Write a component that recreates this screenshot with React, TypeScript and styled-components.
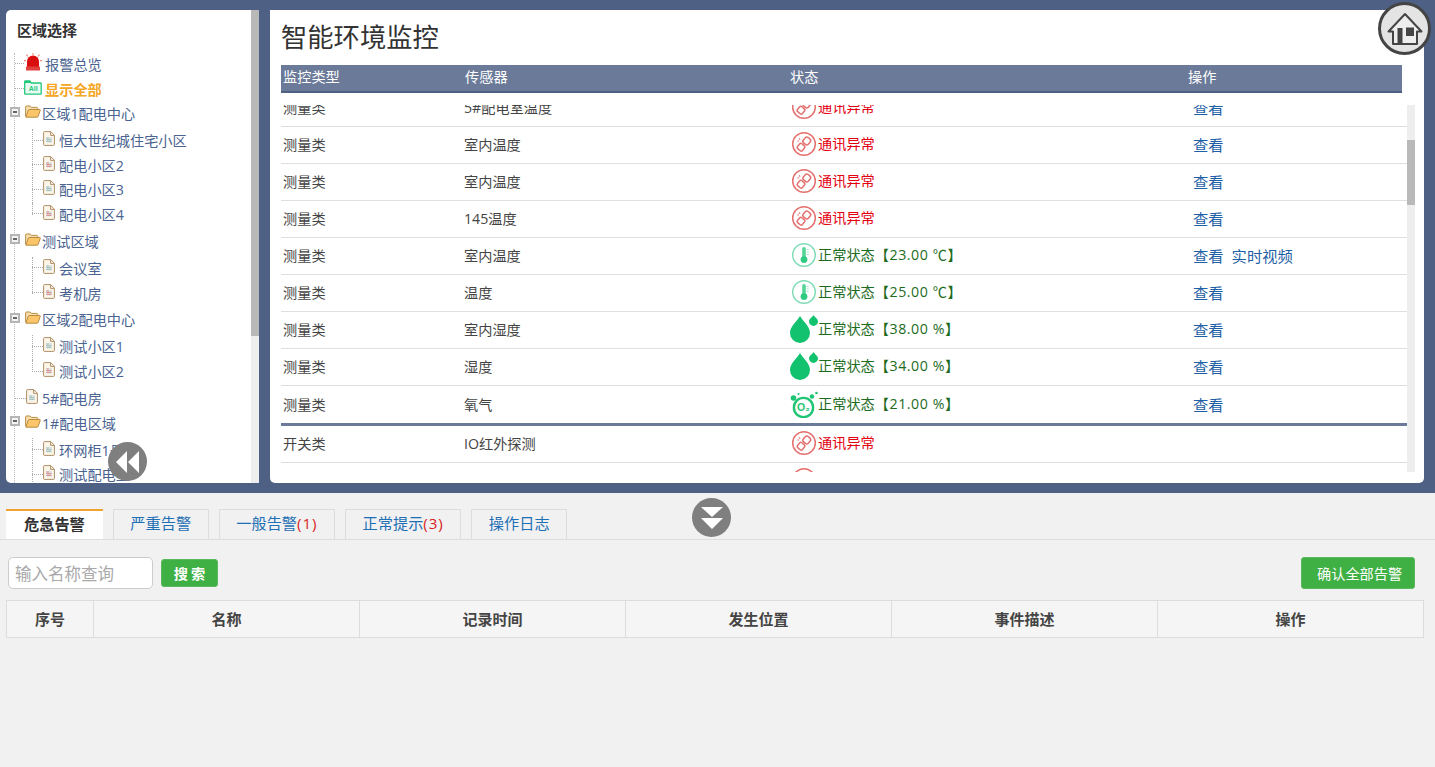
import React from "react";
import styled, { createGlobalStyle } from "styled-components";

const FONT = `"Open Sans", "Noto Sans CJK SC", "Liberation Sans", sans-serif`;

const Global = createGlobalStyle`
  html, body { margin: 0; padding: 0; height: 100%; overflow: hidden; background: #f1f1f1; }
  body { font-family: ${FONT}; font-size: 14.2px; }
  * { box-sizing: border-box; }
  ul { list-style: none; margin: 0; padding: 0; }
`;

const Page = styled.div`position: relative; width: 1435px; height: 767px; overflow: hidden;`;
const TopBand = styled.div`
  display: flex; gap: 11px; height: 493px; padding: 10px 11px 10px 6px; background: #4f6085;
`;

/* ---- tree ---- */
const TreePanel = styled.aside`
  position: relative; width: 253px; height: 473px; background: #fff; overflow: hidden;
  border-radius: 5px 0 0 5px;
  display: flex;
`;
const TreeBody = styled.div`flex: 1; min-width: 0; overflow: hidden;`;
const TreeTitle = styled.h3`
  margin: 0; height: 42.7px; padding: 9px 0 0 11px; font-size: 15px; line-height: 22px; font-weight: 700; color: #333;
`;
const VScroll = styled.div<{ $top: number; $h: number }>`
  width: 8px; height: 100%; background: #eee; position: relative; flex: none;
  &::after {
    content: ""; position: absolute; left: 0; right: 0; top: ${p => p.$top}px; height: ${p => p.$h}px; background: #b9b9b9;
  }
`;
const TopList = styled.ul`margin-left: 8px; border-left: 1px dotted #bdbdbd; `;
const Row = styled.div`
  display: flex; align-items: center; height: 24.6px; white-space: nowrap;
  color: #4a6390; font-size: 14.2px; line-height: 20px;
`;
const RowLabel = styled.span<{ $hl?: boolean; $gap: number }>`
  margin-left: ${p => p.$gap}px;
  color: ${p => (p.$hl ? "#f5a623" : "#4a6390")}; font-weight: ${p => (p.$hl ? 700 : 400)};
`;
const Dash = styled.i<{ $w: number }>`
  display: block; width: ${p => p.$w}px; border-top: 1px dotted #aaa; margin-bottom: 2px; flex: none;
`;
const Expander = styled.i`
  display: block; position: relative; z-index: 1; flex: none; width: 10px; height: 10px; margin: 0 5px 5px -5px;
  background: #f4f4f4; border: 2px solid #b5b5b5;
  &::after { content: ""; position: absolute; left: 1px; right: 1px; top: 2px; height: 2px; background: #666; }
`;
const IconSlot = styled.span`display: flex; flex: none; margin-bottom: 5px;`;
const ChildList = styled.ul`padding: 2.4px 0; margin-left: 17px;`;
const ChildRow = styled.li`
  position: relative;
  &::before {
    content: ""; position: absolute; left: 0; top: 0; bottom: 0; border-left: 1px dotted #aaa;
  }
  &:last-child::before { bottom: 50%; }
`;

const Alarm = () => (
  <svg width="18" height="18" viewBox="0 0 18 18">
    <path d="M3 15V8.5a6 6 0 0 1 12 0V15z" fill="#d90f0f" />
    <rect x="2" y="13.6" width="14" height="4" rx=".6" fill="#e2403f" />
    <g stroke="#f08a7a" strokeWidth="1.1">
      <path d="M9 0v2M2.4 1.6 4 3.4M15.6 1.6 14 3.4M0 7.6h2M16 7.6h2" />
    </g>
  </svg>
);
const AllFolder = () => (
  <svg width="18" height="15" viewBox="0 0 18 15">
    <path d="M.7 3V1.6c0-.5.3-.8.8-.8h4.4l1.4 2.2h9c.5 0 .9.3.9.8v9.6c0 .5-.4.8-.9.8H1.5c-.5 0-.8-.3-.8-.8z" fill="#e9fbf2" stroke="#20c77b" strokeWidth="1.3" />
    <rect x="1" y="1" width="6" height="2" fill="#20c77b" />
    <text x="9.2" y="11" textAnchor="middle" fontSize="7" fontFamily="Liberation Sans" fill="#20c77b" fontWeight="700">All</text>
  </svg>
);
const OpenFolder = () => (
  <svg width="16" height="13" viewBox="0 0 16 13">
    <path d="M.6 11V2c0-.6.4-1 1-1h3.6l1.2 1.4h5.4c.5 0 .9.4.9.9v1.2" fill="#f7dfae" stroke="#b98c43" strokeWidth="1" />
    <path d="M.8 12.2 3.4 5c.1-.3.4-.5.7-.5h10.7c.4 0 .6.4.5.7l-2.3 6.5c-.1.3-.4.5-.7.5z" fill="#fbc56a" stroke="#b98c43" strokeWidth="1" />
  </svg>
);
const FileIcon = ({ tint = "#9cc0b8" }: { tint?: string }) => (
  <svg width="12" height="15" viewBox="0 0 12 15">
    <path d="M.6 1.4c0-.5.3-.8.8-.8h6.4l3.6 3.6v9.4c0 .5-.3.8-.8.8H1.4c-.5 0-.8-.3-.8-.8z" fill="#fbf6ea" stroke="#b08f66" />
    <path d="M7.6.8v3.6h3.6" fill="none" stroke="#b08f66" />
    <rect x="3" y="6" width="6" height="5.4" fill="#dfe3e3" />
    <path d="M3.4 7h2.4M3.4 8.6h5M3.4 10.4h5" stroke={tint} />
  </svg>
);

type Node = { label: string; children?: string[]; leaf?: "alarm" | "all" | "file" };
const tree: Node[] = [
  { label: "报警总览", leaf: "alarm" },
  { label: "显示全部", leaf: "all" },
  { label: "区域1配电中心", children: ["恒大世纪城住宅小区", "配电小区2", "配电小区3", "配电小区4"] },
  { label: "测试区域", children: ["会议室", "考机房"] },
  { label: "区域2配电中心", children: ["测试小区1", "测试小区2"] },
  { label: "5#配电房", leaf: "file" },
  { label: "1#配电区域", children: ["环网柜1号", "测试配电室", "测试配电二"] },
];

const TreeView = () => (
  <TopList>
    {tree.map(n => (
      <li key={n.label}>
        {n.children ? (
          <>
            <Row>
              <Expander />
              <IconSlot><OpenFolder /></IconSlot>
              <RowLabel $gap={1}>{n.label}</RowLabel>
            </Row>
            <ChildList>
              {n.children.map((c, i) => (
                <ChildRow key={c}>
                  <Row>
                    <Dash $w={11} />
                    <IconSlot><FileIcon tint={i % 2 ? "#d98a8a" : "#9cc0b8"} /></IconSlot>
                    <RowLabel $gap={4}>{c}</RowLabel>
                  </Row>
                </ChildRow>
              ))}
            </ChildList>
          </>
        ) : (
          <Row>
            <Dash $w={n.leaf === "file" ? 11 : 9} />
            <IconSlot>
              {n.leaf === "alarm" ? <Alarm /> : n.leaf === "all" ? <AllFolder /> : <FileIcon />}
            </IconSlot>
            <RowLabel $gap={n.leaf === "file" ? 4 : 3} $hl={n.leaf === "all"}>{n.label}</RowLabel>
          </Row>
        )}
      </li>
    ))}
  </TopList>
);

/* ---- monitoring ---- */
const MainPanel = styled.main`
  width: 1154px; height: 473px; background: #fff; border-radius: 0 5px 5px 5px; padding: 0 9px 0 11px;
`;
const Title = styled.h1`
  margin: 0; height: 55px; font-size: 26.3px; line-height: 55px; font-weight: 400; color: #333;
`;
const cols = "183px 326px 403px 1fr";
const HeadRow = styled.div`
  display: grid; grid-template-columns: 182px 325px 398px 1fr; width: 1121px; height: 28px; padding-left: 2px;
  background: #6b7a99; border-bottom: 2px solid #4f6085; color: #fff; font-size: 14.2px; line-height: 24px;
`;
const BodyWrap = styled.div`display: flex; height: 367px; margin-top: 12px; overflow: hidden;`;
const BodyRows = styled.div`width: 1126px; flex: none; overflow: hidden;`;
const Rows = styled.div`margin-top: -15px;`;
const DataRow = styled.div<{ $divider?: boolean }>`
  display: grid; grid-template-columns: ${cols}; align-items: center; height: ${p => (p.$divider ? 40 : 37)}px;
  border-bottom: ${p => (p.$divider ? "3px solid #6b7a99" : "1px solid #dfdfdf")};
  color: #444; font-size: 14.2px; line-height: 20px;
`;
const Kind = styled.span`padding-left: 2px;`;
const Status = styled.span<{ $ok: boolean }>`
  display: flex; align-items: center; height: 28px; margin-top: -2px; color: ${p => (p.$ok ? "#1d6b1d" : "#e3000f")}; white-space: nowrap;
`;
const StatusValue = styled.span`letter-spacing: .55px;`;
const StatusIcon = styled.span`display: flex; flex: none; width: 28px;`;
const Ops = styled.span`display: flex; gap: 8px; color: #1f5fa5; font-size: 15.3px;`;

const Comm = () => (
  <svg width="28" height="26" viewBox="0 0 28 26">
    <circle cx="14" cy="13" r="11.3" fill="#fff" stroke="#e4716f" strokeWidth="1.5" />
    <g transform="rotate(40 14 13)" fill="none" stroke="#e4716f" strokeWidth="1.5">
      <rect x="11" y="5.4" width="6.4" height="7" rx="2" />
      <rect x="10.6" y="14.2" width="6.4" height="6.4" rx="1.6" />
    </g>
    <path d="M9 7.5l1.2 1.2M7.4 10h1.6" stroke="#e4716f" strokeWidth="1.2" />
  </svg>
);
const Thermo = () => (
  <svg width="28" height="26" viewBox="0 0 28 26">
    <circle cx="14" cy="13" r="11.3" fill="#fff" stroke="#7fdcb7" strokeWidth="1.4" />
    <rect x="12.2" y="5" width="3.6" height="12" rx="1.8" fill="#55d498" />
    <circle cx="14" cy="17.6" r="3.4" fill="#2fcb83" />
    <path d="M16.6 7.5h2M16.6 10h2M16.6 12.5h2" stroke="#9ce6c3" />
  </svg>
);
const Drops = () => (
  <svg width="28" height="28" viewBox="0 0 28 28">
    <path d="M10 1c3 5.6 10 10.2 10 17a10 10 0 0 1-20 0C0 11.2 7 6.6 10 1z" fill="#12c26f" />
    <path d="M23.5 0c1 2 4.5 3.8 4.5 6.4a4.5 4.5 0 0 1-9 0c0-2.6 3.5-4.4 4.5-6.4z" fill="#12c26f" />
  </svg>
);
const O2 = () => (
  <svg width="28" height="28" viewBox="0 0 28 28">
    <circle cx="13.5" cy="17.5" r="9.6" fill="#fff" stroke="#1fc474" strokeWidth="2.4" />
    <text x="13.5" y="21.2" textAnchor="middle" fontSize="10.5" fontWeight="700" fontFamily="Liberation Sans" fill="#1fc474">O₂</text>
    <circle cx="3.5" cy="8" r="2.8" fill="#1fc474" />
    <circle cx="8.5" cy="4" r="1.1" fill="#1fc474" />
    <circle cx="22" cy="6.5" r="2.2" fill="#1fc474" />
    <circle cx="26.5" cy="3" r="1.3" fill="#1fc474" />
  </svg>
);

type DataItem = { kind: string; name: string; icon: "comm" | "thermo" | "drop" | "o2"; text: string; value?: string; ops: string[]; divider?: boolean };
const rows: DataItem[] = [
  { kind: "测量类", name: "5#配电室温度", icon: "comm", text: "通讯异常", ops: ["查看"] },
  { kind: "测量类", name: "室内温度", icon: "comm", text: "通讯异常", ops: ["查看"] },
  { kind: "测量类", name: "室内温度", icon: "comm", text: "通讯异常", ops: ["查看"] },
  { kind: "测量类", name: "145温度", icon: "comm", text: "通讯异常", ops: ["查看"] },
  { kind: "测量类", name: "室内温度", icon: "thermo", text: "正常状态", value: "【23.00 ℃】", ops: ["查看", "实时视频"] },
  { kind: "测量类", name: "温度", icon: "thermo", text: "正常状态", value: "【25.00 ℃】", ops: ["查看"] },
  { kind: "测量类", name: "室内湿度", icon: "drop", text: "正常状态", value: "【38.00 %】", ops: ["查看"] },
  { kind: "测量类", name: "湿度", icon: "drop", text: "正常状态", value: "【34.00 %】", ops: ["查看"] },
  { kind: "测量类", name: "氧气", icon: "o2", text: "正常状态", value: "【21.00 %】", ops: ["查看"], divider: true },
  { kind: "开关类", name: "IO红外探测", icon: "comm", text: "通讯异常", ops: [] },
  { kind: "开关类", name: "IO烟感探测", icon: "comm", text: "通讯异常", ops: [] },
];
const icons = { comm: <Comm />, thermo: <Thermo />, drop: <Drops />, o2: <O2 /> };

/* ---- overlays ---- */
const RoundButton = styled.button<{ $x: number; $y: number }>`
  position: absolute; left: ${p => p.$x}px; top: ${p => p.$y}px; width: 39px; height: 39px; padding: 0; border: 0;
  border-radius: 50%; background: #7f7f7f; display: flex; align-items: center; justify-content: center;
`;
const HomeButton = styled.button`
  position: absolute; left: 1378px; top: 2px; width: 53px; height: 53px; padding: 0; border: 3px solid #444;
  border-radius: 50%; background: #e4e4e4; display: flex; align-items: center; justify-content: center;
`;

/* ---- bottom ---- */
const Tabs = styled.nav`
  display: flex; gap: 10px; height: 47px; padding: 16px 0 0 6px; border-bottom: 1px solid #ddd;
`;
const Tab = styled.div<{ $active?: boolean }>`
  height: 30px; padding: 0 16.6px; font-size: 15.2px; line-height: 26px; white-space: nowrap;
  ${p => p.$active
    ? "background:#fff;border-top:2px solid #f0a32f;color:#333;font-weight:700;padding:0 18px;line-height:26px;"
    : "background:#f1f1f1;border:1px solid #ddd;border-bottom:0;color:#1f6fb5;"}
`;
const Count = styled.span`color: #d81e1e; letter-spacing: .9px;`;
const Toolbar = styled.div`
  display: flex; align-items: center; height: 32px; margin: 17px 20px 0 8px;
`;
const SearchInput = styled.input`
  width: 145px; height: 32px; padding: 0 6px; border: 1px solid #ccc; border-radius: 5px; background: #fff;
  font: 400 16.5px "Noto Sans CJK SC", sans-serif; color: #333; outline: none;
  &::placeholder { color: #a9a9a9; opacity: 1; }
`;
const GreenButton = styled.button<{ $wide?: boolean }>`
  height: ${p => (p.$wide ? 32 : 28)}px; width: ${p => (p.$wide ? 114 : 57)}px; margin-left: ${p => (p.$wide ? "auto" : "8px")};
  padding: ${p => (p.$wide ? "0 0 0 15px" : "0")}; text-align: ${p => (p.$wide ? "left" : "center")};
  border: 1px solid #5cb85c; border-radius: 3px; background: #3fb043; color: #fff;
  font: ${p => (p.$wide ? 400 : 700)} 14.2px "Noto Sans CJK SC", sans-serif;
`;
const AlarmTable = styled.div`
  display: grid; grid-template-columns: 86px repeat(4, 266px) 1fr; width: 1418px; height: 38px; margin: 11px 0 0 6px;
  background: #f5f5f5; border: 1px solid #ddd; 
`;
const Th = styled.div`
  display: flex; align-items: center; justify-content: center; padding-bottom: 2px; font-size: 15px; font-weight: 700; color: #444;
  border-left: 1px solid #ddd;
  &:first-child { border-left: 0; }
`;

export default function App() {
  return (
    <Page>
      <Global />
      <TopBand>
        <TreePanel>
          <TreeBody>
            <TreeTitle>区域选择</TreeTitle>
            <TreeView />
          </TreeBody>
          <VScroll $top={0} $h={326} />
        </TreePanel>
        <MainPanel>
          <Title>智能环境监控</Title>
          <HeadRow>
            <span>监控类型</span><span>传感器</span><span>状态</span><span>操作</span>
          </HeadRow>
          <BodyWrap>
            <BodyRows>
              <Rows>
                {rows.map((r, i) => (
                  <DataRow key={i} $divider={r.divider}>
                    <Kind>{r.kind}</Kind>
                    <span>{r.name}</span>
                    <Status $ok={r.icon !== "comm"}>
                      <StatusIcon>{icons[r.icon]}</StatusIcon>
                      <span>{r.text}<StatusValue>{r.value}</StatusValue></span>
                    </Status>
                    <Ops>{r.ops.map(o => <span key={o}>{o}</span>)}</Ops>
                  </DataRow>
                ))}
              </Rows>
            </BodyRows>
            <VScroll $top={35} $h={65} />
          </BodyWrap>
        </MainPanel>
      </TopBand>

      <Tabs>
        <Tab $active>危急告警</Tab>
        <Tab>严重告警</Tab>
        <Tab>一般告警<Count>(1)</Count></Tab>
        <Tab>正常提示<Count>(3)</Count></Tab>
        <Tab>操作日志</Tab>
      </Tabs>
      <Toolbar>
        <SearchInput placeholder="输入名称查询" />
        <GreenButton>搜 索</GreenButton>
        <GreenButton $wide>确认全部告警</GreenButton>
      </Toolbar>
      <AlarmTable>
        <Th>序号</Th><Th>名称</Th><Th>记录时间</Th><Th>发生位置</Th><Th>事件描述</Th><Th>操作</Th>
      </AlarmTable>

      <HomeButton aria-label="首页">
        <svg width="36" height="34" viewBox="0 0 36 34">
          <path d="M1.5 19.5 18 2l16.500 17.500H30V32H6V19.500z" fill="#eeeeee" stroke="#444" strokeWidth="2" strokeLinejoin="round" />
          <rect x="10.5" y="16" width="5" height="16" fill="#444" />
          <rect x="19" y="15.5" width="8" height="8.5" fill="#444" />
        </svg>
      </HomeButton>
      <RoundButton $x={108} $y={442} aria-label="收起">
        <svg width="26" height="24" viewBox="0 0 26 24">
          <path d="M12 1 1 12l11 11zM24 1 13 12l11 11z" fill="#fff" />
        </svg>
      </RoundButton>
      <RoundButton $x={692} $y={498} aria-label="展开">
        <svg width="24" height="26" viewBox="0 0 24 26">
          <path d="M1 2h22L12 12zM1 13h22L12 24z" fill="#fff" />
        </svg>
      </RoundButton>
    </Page>
  );
}
